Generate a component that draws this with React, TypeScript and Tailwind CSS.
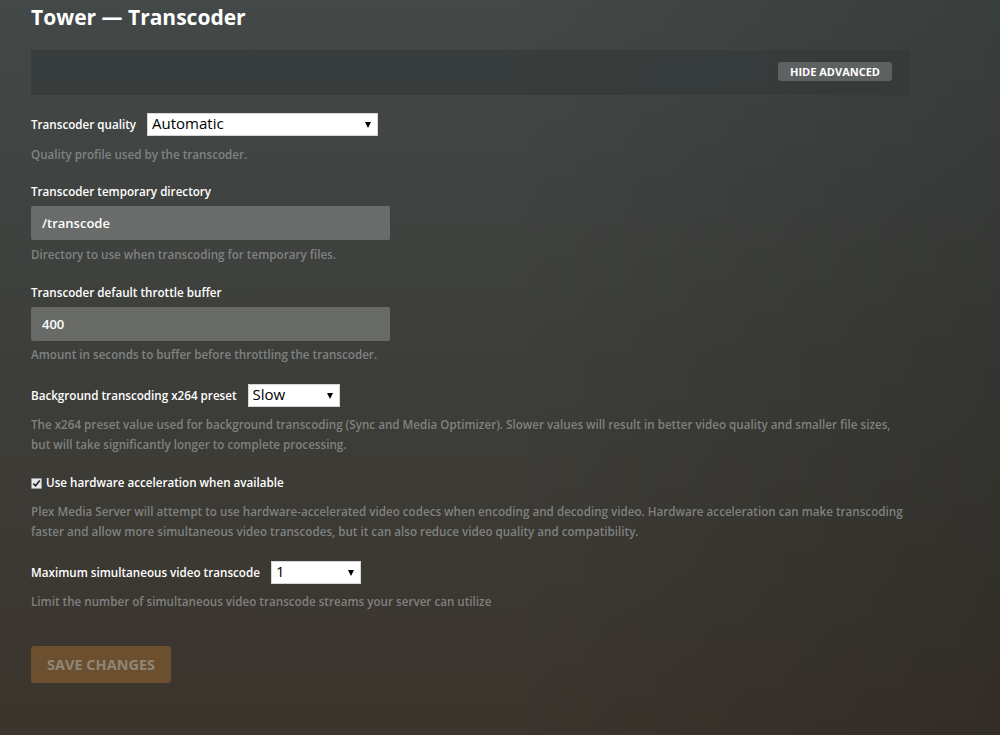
import { useState } from "react";

const font = { fontFamily: '"Open Sans", "Liberation Sans", sans-serif' };

function Select({ value, options, width }: { value: string; options: string[]; width: string }) {
  const [v, setV] = useState(value);
  return (
    <div className={`relative flex h-[23px] ${width} shrink-0 items-center border border-[#d6d6d6] bg-white pl-[4px]`}>
      <span className="pb-[2px] text-[15px] leading-[19px] text-black">{v}</span>
      <span className="pointer-events-none absolute right-[6px] top-[8px] h-0 w-0 border-x-[3px] border-t-[6px] border-x-transparent border-t-black" />
      <select
        value={v}
        onChange={(e) => setV(e.target.value)}
        className="absolute inset-0 h-full w-full cursor-pointer appearance-none opacity-0"
      >
        {options.map((o) => (
          <option key={o}>{o}</option>
        ))}
      </select>
    </div>
  );
}

function Help({ children }: { children: React.ReactNode }) {
  return <p className="text-[11.65px] leading-5 font-semibold text-[#888b8b]/90">{children}</p>;
}

function Label({ children }: { children: React.ReactNode }) {
  return <span className="block text-[11.65px] leading-5 font-semibold text-white">{children}</span>;
}

export default function App() {
  const [hw, setHw] = useState(true);

  return (
    <div className="relative min-h-[735px] w-full bg-linear-to-b from-[#434948] via-[#3d3e3a] to-[#3b342c]" style={font}>
      {/* soft darkening toward the right edge */}
      <div className="pointer-events-none absolute inset-0 bg-linear-to-r from-transparent via-transparent to-black/15" />
      <div className="relative w-[910px] pl-[31px]">
        <h1 className="pt-[1px] text-[21px] leading-[32px] font-bold text-white">Tower — Transcoder</h1>

        <div className="mt-[17px] flex h-[45px] items-center justify-end bg-[#353a39]/80 pr-[18px]">
          <button className="mb-[2px] h-[19px] rounded-[3px] bg-[#5d6261] px-[12px] text-[11px] leading-[19px] font-bold text-white">
            HIDE ADVANCED
          </button>
        </div>

        <div className="mt-[18px] flex items-center gap-[11px]">
          <Label>Transcoder quality</Label>
          <Select value="Automatic" options={["Automatic", "Make My CPU Hurt", "Prefer higher speed encoding"]} width="w-[231px]" />
        </div>
        <div className="mt-[9px]">
          <Help>Quality profile used by the transcoder.</Help>
        </div>

        <div className="mt-[17px]">
          <Label>Transcoder temporary directory</Label>
        </div>
        <input
          defaultValue="/transcode"
          className="mt-[4px] block h-[34px] w-[359px] rounded-[2px] bg-[#696c6a] px-[11px] text-[13px] font-semibold text-white outline-none"
          style={font}
        />
        <div className="mt-[5px]">
          <Help>Directory to use when transcoding for temporary files.</Help>
        </div>

        <div className="mt-[18px]">
          <Label>Transcoder default throttle buffer</Label>
        </div>
        <input
          defaultValue="400"
          className="mt-[4px] block h-[34px] w-[359px] rounded-[2px] bg-[#686a67] px-[11px] text-[13px] font-semibold text-white outline-none"
          style={font}
        />
        <div className="mt-[4px]">
          <Help>Amount in seconds to buffer before throttling the transcoder.</Help>
        </div>

        <div className="mt-[19px] flex items-center gap-[11px]">
          <Label>Background transcoding x264 preset</Label>
          <Select value="Slow" options={["Ultra fast", "Very fast", "Faster", "Fast", "Medium", "Slow", "Slower", "Very slow"]} width="w-[92px]" />
        </div>
        <div className="mt-[8px]">
          <Help>
            The x264 preset value used for background transcoding (Sync and Media Optimizer). Slower values will result in better video quality and smaller file sizes, but will take significantly longer to complete processing.
          </Help>
        </div>

        <label className="mt-[18px] flex cursor-pointer items-center gap-[4px]" onClick={() => setHw(!hw)}>
          <span className="flex h-[11px] w-[11px] items-center justify-center rounded-[1px] border border-[#9a9a9a] bg-[#e8e8e8]">
            {hw && (
              <svg viewBox="0 0 10 10" className="h-[9px] w-[9px]">
                <path d="M1.5 5.2 L4 7.6 L8.6 1.8" fill="none" stroke="#222" strokeWidth="1.8" />
              </svg>
            )}
          </span>
          <Label>Use hardware acceleration when available</Label>
        </label>
        <div className="mt-[9px]">
          <Help>
            Plex Media Server will attempt to use hardware-accelerated video codecs when encoding and decoding video. Hardware acceleration can make transcoding faster and allow more simultaneous video transcodes, but it can also reduce video quality and compatibility.
          </Help>
        </div>

        <div className="mt-[19px] flex items-center gap-[11px]">
          <Label>Maximum simultaneous video transcode</Label>
          <Select value="1" options={["1", "2", "3", "4", "Unlimited"]} width="w-[90px]" />
        </div>
        <div className="mt-[8px]">
          <Help>Limit the number of simultaneous video transcode streams your server can utilize</Help>
        </div>

        <button
          disabled
          className="mt-[34px] h-[37px] rounded-[3px] bg-[#6b4f2e] px-[16px] text-[14.5px] font-bold text-[#8d8679]"
        >
          SAVE CHANGES
        </button>
      </div>
    </div>
  );
}
